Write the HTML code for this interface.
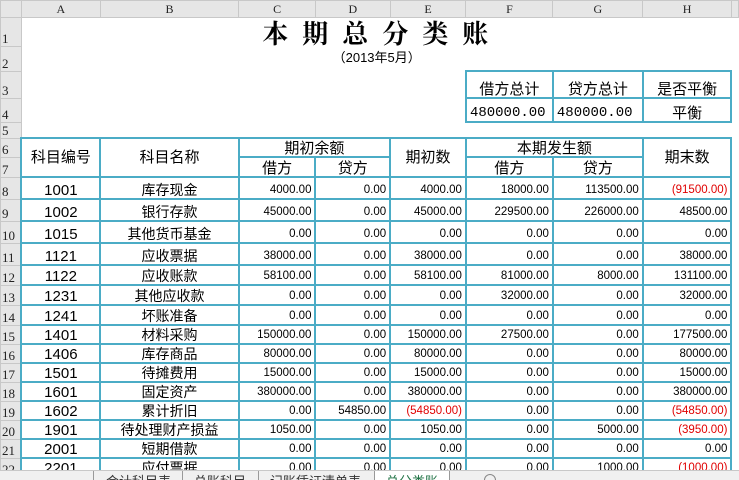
<!DOCTYPE html>
<html><head><meta charset="utf-8"><style>
*{margin:0;padding:0;box-sizing:border-box}
body{width:739px;height:480px;overflow:hidden;background:#fff;position:relative;font-family:"Liberation Sans","Noto Sans CJK SC",sans-serif}
table{position:absolute;left:0;top:0;border-collapse:collapse;table-layout:fixed}
td{padding:0 3px;font-size:13px;white-space:nowrap;overflow:hidden;vertical-align:bottom;line-height:15px}
.rh{background:#e6e6e6;border:1px solid #c8c8c8;color:#222;font-size:13px;text-align:left;padding-left:1px;font-family:"Liberation Serif","Noto Serif CJK SC",serif}
.ch{background:#e6e6e6;border:1px solid #c8c8c8;text-align:center;font-size:12px;color:#222;font-family:"Liberation Serif",serif;vertical-align:middle}
.b{border:2px solid #4bacc6}
.c{text-align:center;font-size:14px}
.r{text-align:right;font-size:11.5px;font-family:"Liberation Sans Narrow","Liberation Sans",sans-serif}
.red{color:#e00000}
.n{font-size:15px}
.tabs{position:absolute;left:0;top:470px;width:739px;height:10px;background:#f0f0f0;border-top:1px solid #c8c8c8;overflow:hidden}
.sep{position:absolute;top:0;height:10px;width:1px;background:#999}
.tl{position:absolute;top:3px;font-size:13px;line-height:15px;color:#333;white-space:nowrap}
</style></head><body>
<table>
<colgroup><col style="width:21px"><col style="width:79px"><col style="width:139px"><col style="width:77px"><col style="width:75px"><col style="width:76px"><col style="width:87px"><col style="width:90px"><col style="width:89px"><col style="width:6px"></colgroup>
<tr style="height:17px"><td class="ch"></td><td class="ch">A</td><td class="ch">B</td><td class="ch">C</td><td class="ch">D</td><td class="ch">E</td><td class="ch">F</td><td class="ch">G</td><td class="ch">H</td><td class="ch"></td></tr>
<tr style="height:28px"><td class="rh">1</td><td colspan="8" class="c" style="height:28px;font-size:26px;font-weight:bold;font-family:'Liberation Serif','Noto Serif CJK SC',serif;letter-spacing:14px;line-height:28px;vertical-align:middle;padding-left:14px"><span style="position:relative;top:3px">本期总分类账</span></td><td></td></tr>
<tr style="height:25px"><td class="rh">2</td><td colspan="8" class="c" style="font-size:13px;vertical-align:top;padding-top:4px">（2013年5月）</td><td></td></tr>
<tr style="height:27px"><td class="rh">3</td><td></td><td></td><td></td><td></td><td></td><td class="b c n">借方总计</td><td class="b c n">贷方总计</td><td class="b c n">是否平衡</td><td></td></tr>
<tr style="height:24px"><td class="rh">4</td><td></td><td></td><td></td><td></td><td></td><td class="b n" style="font-family:'Liberation Mono',monospace;font-size:14px">480000.00</td><td class="b n" style="font-family:'Liberation Mono',monospace;font-size:14px">480000.00</td><td class="b c n">平衡</td><td></td></tr>
<tr style="height:16px"><td class="rh">5</td><td></td><td></td><td></td><td></td><td></td><td></td><td></td><td></td><td></td></tr>
<tr style="height:19px"><td class="rh">6</td><td class="b c n" rowspan="2" style="vertical-align:middle">科目编号</td><td class="b c n" rowspan="2" style="vertical-align:middle">科目名称</td><td class="b c n" colspan="2">期初余额</td><td class="b c n" rowspan="2" style="vertical-align:middle">期初数</td><td class="b c n" colspan="2">本期发生额</td><td class="b c n" rowspan="2" style="vertical-align:middle">期末数</td><td></td></tr>
<tr style="height:20px"><td class="rh">7</td><td class="b c n">借方</td><td class="b c n">贷方</td><td class="b c n">借方</td><td class="b c n">贷方</td><td></td></tr>
<tr style="height:22px"><td class="rh">8</td><td class="b c n">1001</td><td class="b c">库存现金</td><td class="b r">4000.00</td><td class="b r">0.00</td><td class="b r">4000.00</td><td class="b r">18000.00</td><td class="b r">113500.00</td><td class="b r red">(91500.00)</td><td></td></tr>
<tr style="height:22px"><td class="rh">9</td><td class="b c n">1002</td><td class="b c">银行存款</td><td class="b r">45000.00</td><td class="b r">0.00</td><td class="b r">45000.00</td><td class="b r">229500.00</td><td class="b r">226000.00</td><td class="b r">48500.00</td><td></td></tr>
<tr style="height:22px"><td class="rh">10</td><td class="b c n">1015</td><td class="b c">其他货币基金</td><td class="b r">0.00</td><td class="b r">0.00</td><td class="b r">0.00</td><td class="b r">0.00</td><td class="b r">0.00</td><td class="b r">0.00</td><td></td></tr>
<tr style="height:22px"><td class="rh">11</td><td class="b c n">1121</td><td class="b c">应收票据</td><td class="b r">38000.00</td><td class="b r">0.00</td><td class="b r">38000.00</td><td class="b r">0.00</td><td class="b r">0.00</td><td class="b r">38000.00</td><td></td></tr>
<tr style="height:20px"><td class="rh">12</td><td class="b c n">1122</td><td class="b c">应收账款</td><td class="b r">58100.00</td><td class="b r">0.00</td><td class="b r">58100.00</td><td class="b r">81000.00</td><td class="b r">8000.00</td><td class="b r">131100.00</td><td></td></tr>
<tr style="height:20px"><td class="rh">13</td><td class="b c n">1231</td><td class="b c">其他应收款</td><td class="b r">0.00</td><td class="b r">0.00</td><td class="b r">0.00</td><td class="b r">32000.00</td><td class="b r">0.00</td><td class="b r">32000.00</td><td></td></tr>
<tr style="height:20px"><td class="rh">14</td><td class="b c n">1241</td><td class="b c">坏账准备</td><td class="b r">0.00</td><td class="b r">0.00</td><td class="b r">0.00</td><td class="b r">0.00</td><td class="b r">0.00</td><td class="b r">0.00</td><td></td></tr>
<tr style="height:19px"><td class="rh">15</td><td class="b c n">1401</td><td class="b c">材料采购</td><td class="b r">150000.00</td><td class="b r">0.00</td><td class="b r">150000.00</td><td class="b r">27500.00</td><td class="b r">0.00</td><td class="b r">177500.00</td><td></td></tr>
<tr style="height:19px"><td class="rh">16</td><td class="b c n">1406</td><td class="b c">库存商品</td><td class="b r">80000.00</td><td class="b r">0.00</td><td class="b r">80000.00</td><td class="b r">0.00</td><td class="b r">0.00</td><td class="b r">80000.00</td><td></td></tr>
<tr style="height:19px"><td class="rh">17</td><td class="b c n">1501</td><td class="b c">待摊费用</td><td class="b r">15000.00</td><td class="b r">0.00</td><td class="b r">15000.00</td><td class="b r">0.00</td><td class="b r">0.00</td><td class="b r">15000.00</td><td></td></tr>
<tr style="height:19px"><td class="rh">18</td><td class="b c n">1601</td><td class="b c">固定资产</td><td class="b r">380000.00</td><td class="b r">0.00</td><td class="b r">380000.00</td><td class="b r">0.00</td><td class="b r">0.00</td><td class="b r">380000.00</td><td></td></tr>
<tr style="height:19px"><td class="rh">19</td><td class="b c n">1602</td><td class="b c">累计折旧</td><td class="b r">0.00</td><td class="b r">54850.00</td><td class="b r red">(54850.00)</td><td class="b r">0.00</td><td class="b r">0.00</td><td class="b r red">(54850.00)</td><td></td></tr>
<tr style="height:19px"><td class="rh">20</td><td class="b c n">1901</td><td class="b c">待处理财产损益</td><td class="b r">1050.00</td><td class="b r">0.00</td><td class="b r">1050.00</td><td class="b r">0.00</td><td class="b r">5000.00</td><td class="b r red">(3950.00)</td><td></td></tr>
<tr style="height:19px"><td class="rh">21</td><td class="b c n">2001</td><td class="b c">短期借款</td><td class="b r">0.00</td><td class="b r">0.00</td><td class="b r">0.00</td><td class="b r">0.00</td><td class="b r">0.00</td><td class="b r">0.00</td><td></td></tr>
<tr style="height:19px"><td class="rh">22</td><td class="b c n">2201</td><td class="b c">应付票据</td><td class="b r">0.00</td><td class="b r">0.00</td><td class="b r">0.00</td><td class="b r">0.00</td><td class="b r">1000.00</td><td class="b r red">(1000.00)</td><td></td></tr>
</table>
<div class="tabs">
<div class="sep" style="left:93px"></div>
<div class="tl" style="left:106px">会计科目表</div>
<div class="sep" style="left:182px"></div>
<div class="tl" style="left:194px">总账科目</div>
<div class="sep" style="left:258px"></div>
<div class="tl" style="left:270px">记账凭证清单表</div>
<div style="position:absolute;left:374px;top:-1px;width:76px;height:12px;background:#fff;border-left:1px solid #999;border-right:1px solid #999"></div>
<div class="tl" style="left:386px;color:#217346">总分类账</div>
<div style="position:absolute;left:484px;top:3px;width:12px;height:12px;border:1px solid #888;border-radius:50%"></div>
</div>
</body></html>
